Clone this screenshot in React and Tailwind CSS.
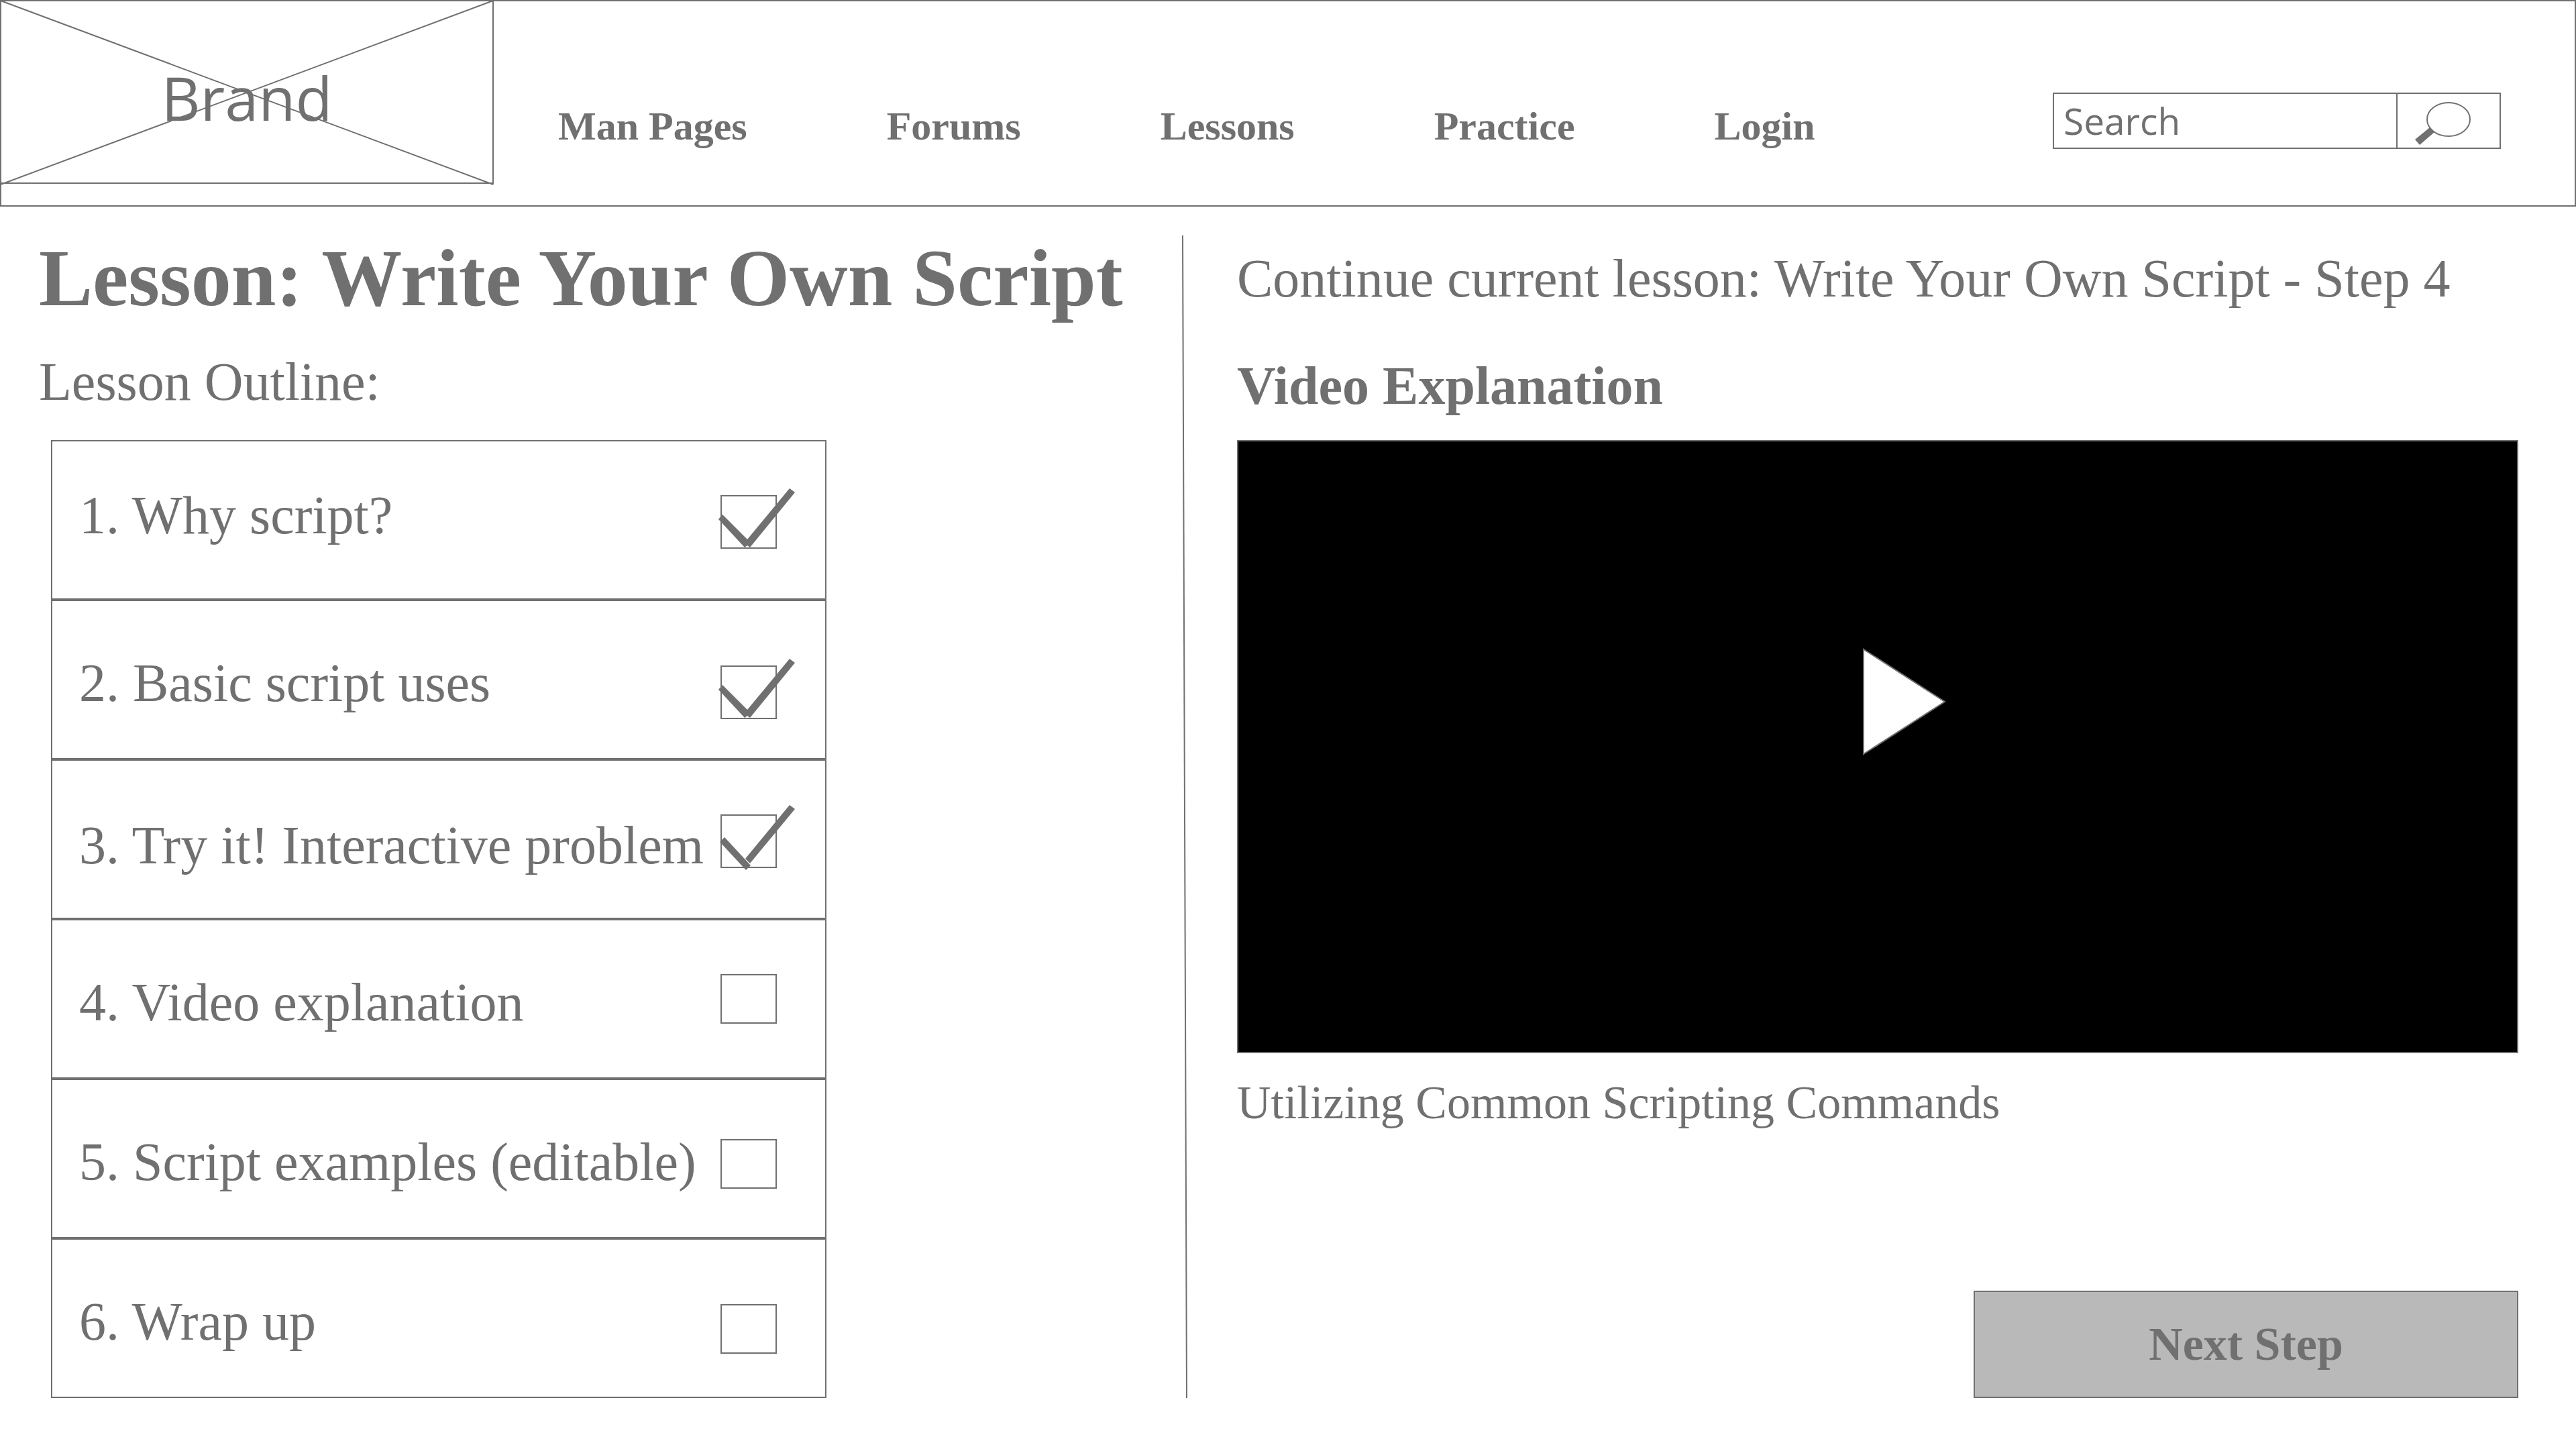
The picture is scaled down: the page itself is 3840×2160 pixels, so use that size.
import React from "react";

const NAV = ["Man Pages", "Forums", "Lessons", "Practice", "Login"];

const TICK = ["-3,36 3,29 40,66 103,-10 111,-4 44,78 40,75 36,78"];
const TICK_SPLIT = ["-1,41 6,34 45,76 38,83", "103,-14 111,-8 44,73 37,66"];

const STEPS = [
  { label: "1. Why script?", text: "pt-16", box: "mt-20 h-20", tick: TICK },
  { label: "2. Basic script uses", text: "pt-19", box: "mt-24 h-20", tick: TICK },
  { label: "3. Try it! Interactive problem", text: "pt-20", box: "mt-20 h-20", tick: TICK_SPLIT },
  { label: "4. Video explanation", text: "pt-19", box: "mt-20 h-[74px]" },
  { label: "5. Script examples (editable)", text: "pt-19", box: "mt-22 h-[74px]" },
  { label: "6. Wrap up", text: "pt-19", box: "mt-24 h-[74px]" },
];

function Brand() {
  return (
    <a href="#" className="relative flex h-[274px] w-[736px] shrink-0 items-center justify-center pt-4">
      <svg className="absolute inset-0 h-full w-full overflow-visible" viewBox="0 0 736 274" fill="none" stroke="#707070" strokeWidth="2" aria-hidden="true">
        <path d="M1 1H735V275M1 273H735M1 1L735 275M735 1L1 275" />
      </svg>
      <span className="relative font-['Open_Sans',sans-serif] text-[90px] leading-[120px]">Brand</span>
    </a>
  );
}

function SearchBox() {
  return (
    <form className="mt-[138px] mr-28 flex h-[84px] w-[668px] shrink-0 border-2 border-[#707070]" onSubmit={(e) => e.preventDefault()}>
      <input
        type="text"
        aria-label="Search"
        placeholder="Search"
        className="min-w-0 flex-1 bg-transparent px-3.5 font-['Open_Sans',sans-serif] text-[55px] leading-[76px] text-[#707070] outline-none placeholder:text-[#707070] placeholder:opacity-100"
      />
      <button type="submit" aria-label="Submit search" className="flex w-[154px] items-start border-l-2 border-[#707070]">
        <svg className="h-20 w-[152px]" viewBox="0 0 152 80" aria-hidden="true">
          <ellipse cx="76" cy="38" rx="32" ry="25" fill="none" stroke="#707070" strokeWidth="2" />
          <path d="M48 50L55 57L33 76L26 68Z" fill="#707070" />
        </svg>
      </button>
    </form>
  );
}

function Step({ step }) {
  return (
    <li className="border-2 border-[#707070]">
      <label className="flex h-[234px] items-start justify-between pr-[72px] pl-10">
        <span className={"whitespace-nowrap text-[80px] leading-[92px] " + step.text}>{step.label}</span>
        <span className={"relative w-[84px] shrink-0 " + step.box}>
          <input
            type="checkbox"
            defaultChecked={Boolean(step.tick)}
            className="peer block h-full w-full appearance-none border-2 border-[#707070] bg-white"
          />
          {step.tick && (
            <svg className="pointer-events-none absolute top-0 left-0 hidden h-20 w-[84px] overflow-visible peer-checked:block" viewBox="0 0 84 80" fill="#707070" aria-hidden="true">
              {step.tick.map((points) => (
                <polygon key={points} points={points} />
              ))}
            </svg>
          )}
        </span>
      </label>
    </li>
  );
}

export default function App() {
  return (
    <div className="min-h-screen bg-white font-['Liberation_Serif',serif] text-[#707070]">
      <header className="flex h-[308px] items-start shadow-[inset_0_0_0_2px_#707070]">
        <Brand />
        <nav className="ml-24 flex flex-1 gap-52 pt-[154px] text-[60px] leading-[68px] font-bold">
          {NAV.map((item) => (
            <a key={item} href="#" className="whitespace-nowrap">
              {item}
            </a>
          ))}
        </nav>
        <SearchBox />
      </header>

      <main className="flex pt-[43px] pr-[86px]">
        <section className="w-[1762px] shrink-0 pl-[58px]">
          <h1 className="text-[120px] leading-[128px] font-bold whitespace-nowrap">Lesson: Write Your Own Script</h1>
          <h2 className="mt-11 text-[80px] leading-[92px]">Lesson Outline:</h2>
          <ol className="mt-[41px] ml-[18px] w-[1156px]">
            {STEPS.map((step) => (
              <Step key={step.label} step={step} />
            ))}
          </ol>
        </section>

        <svg className="w-2 shrink-0 self-stretch" viewBox="0 0 8 1733" preserveAspectRatio="none" aria-hidden="true">
          <line x1="1" y1="0" x2="7" y2="1733" stroke="#707070" strokeWidth="2" />
        </svg>

        <section className="flex flex-1 flex-col pl-[74px]">
          <p className="mt-[18px] text-[80px] leading-[92px] whitespace-nowrap">
            Continue current lesson: Write Your Own Script - Step 4
          </p>
          <h2 className="mt-[68px] text-[80px] leading-[92px] font-bold">Video Explanation</h2>
          <button type="button" aria-label="Play video" className="mt-[35px] flex h-[914px] items-start justify-center border-2 border-[#707070] bg-black pt-[308px] pl-20">
            <svg className="h-[160px] w-[124px]" viewBox="0 0 124 160" aria-hidden="true">
              <polygon points="1,2 1,158 122,80" fill="#fff" stroke="#707070" strokeWidth="2" />
            </svg>
          </button>
          <p className="mt-[34px] text-[70px] leading-[80px]">Utilizing Common Scripting Commands</p>
          <button type="button" className="mt-auto h-40 w-[812px] self-end border-2 border-[#707070] bg-[#b9b9b9] text-[70px] leading-[80px] font-bold">
            Next Step
          </button>
        </section>
      </main>
    </div>
  );
}
